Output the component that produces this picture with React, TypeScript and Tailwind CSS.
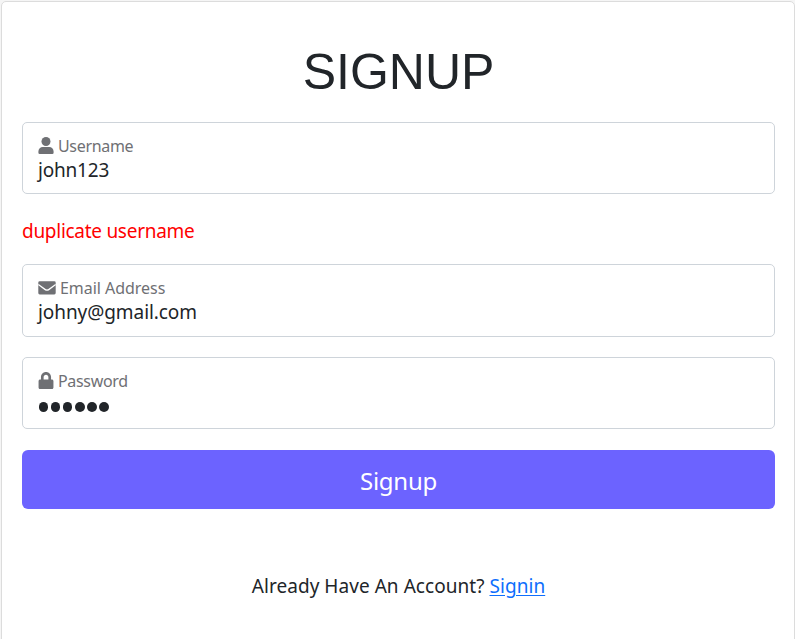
import type { ReactNode } from "react";
import { FaLock } from "react-icons/fa";

type FieldProps = {
  icon: ReactNode;
  label: string;
  labelClass: string;
  className: string;
  children: ReactNode;
};

function UserIcon() {
  return (
    <svg viewBox="0 0 16 17" fill="currentColor" className="mb-px h-[17px] w-4 shrink-0" aria-hidden="true">
      <circle cx="8" cy="4.5" r="4.5" />
      <path d="M4.8 10h6.4a4.4 4.4 0 0 1 4.4 4.4v1.3a1.3 1.3 0 0 1-1.3 1.3H1.7a1.3 1.3 0 0 1-1.3-1.3v-1.3A4.4 4.4 0 0 1 4.8 10z" />
    </svg>
  );
}

function EnvelopeIcon() {
  return (
    <svg viewBox="0 0 18 14" className="h-[14px] w-[18px] shrink-0" aria-hidden="true">
      <rect x="0.3" y="0.3" width="17.4" height="13.2" rx="1.4" fill="currentColor" />
      <path d="M0.3 3.5L7.3 8.6Q9 9.8 10.7 8.6L17.7 3.5" fill="none" stroke="white" strokeWidth="1.3" />
    </svg>
  );
}

function Field({ icon, label, labelClass, className, children }: FieldProps) {
  return (
    <div className={`rounded-[5px] border border-[#ced4da] px-[15px] pt-[13px] ${className}`}>
      <div className="flex h-5 items-center text-[#6f7074]">
        {icon}
        <span className={`whitespace-nowrap text-[16px] leading-5 ${labelClass}`}>{label}</span>
      </div>
      {children}
    </div>
  );
}

export default function App() {
  return (
    <div className="h-[639px] overflow-hidden bg-[#f5f5f5] pl-px pt-px font-['Noto_Sans',sans-serif] text-[#212529]">
      <main className="h-[650px] w-[794px] rounded-[5px] border border-[#dcdcdc] bg-white px-5 pt-10">
        <h1 className="h-[60px] w-[753px] text-center font-['Liberation_Sans',sans-serif] text-[50px] leading-[60px]">SIGNUP</h1>
        <form className="mt-5 w-[753px]" onSubmit={(e) => e.preventDefault()}>
          <Field
            icon={<UserIcon />}
            label="Username"
            labelClass="ml-1 tracking-[-0.33px]"
            className="h-[72px]"
          >
            <div className="mt-[2px] text-[19px] leading-6 tracking-[-0.2px]">john123</div>
          </Field>
          <p className="mt-[25px] h-6 text-[19px] leading-6 tracking-[-0.28px] text-[#ff0000]">duplicate username</p>
          <Field
            icon={<EnvelopeIcon />}
            label="Email Address"
            labelClass="ml-1 tracking-[-0.04px]"
            className="mt-[21px] h-[73px]"
          >
            <div className="mt-[2px] text-[19px] leading-6 tracking-[-0.07px]">johny@gmail.com</div>
          </Field>
          <Field
            icon={<FaLock className="mb-px h-[17px] w-4 shrink-0" />}
            label="Password"
            labelClass="ml-1 tracking-[-0.33px]"
            className="mt-5 h-[72px]"
          >
            <div className="mt-[11px] flex gap-[2.6px] pl-[0.8px]">
              {[0, 1, 2, 3, 4, 5].map((dot) => (
                <span key={dot} className="size-[9.5px] rounded-full bg-[#212529]" />
              ))}
            </div>
          </Field>
          <button className="mt-[21px] flex h-[59px] w-full items-center justify-center rounded-[6px] bg-[#6c63ff] text-[24px] tracking-[-0.25px] text-white">
            <span className="pt-[2px] leading-8">Signup</span>
          </button>
        </form>
        <p className="mt-[65px] w-[753px] whitespace-nowrap text-center text-[19px] leading-6 tracking-[0.05px]">
          Already Have An Account?{" "}
          <a href="#" className="text-[#0d6efd] underline underline-offset-2">Signin</a>
        </p>
      </main>
    </div>
  );
}
